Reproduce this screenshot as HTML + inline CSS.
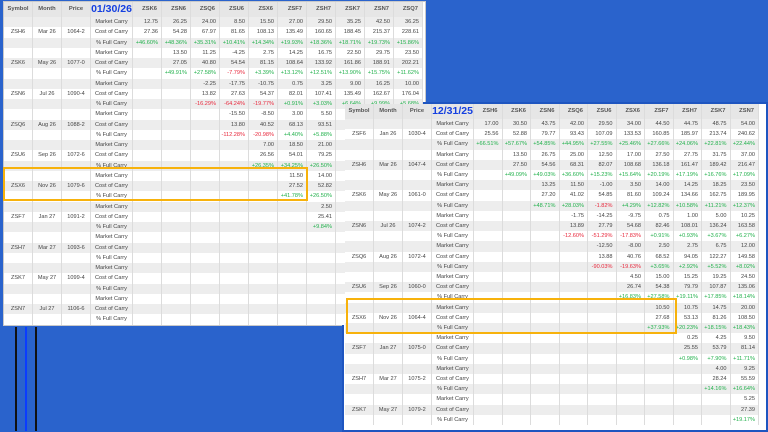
<!DOCTYPE html>
<html><head><meta charset="utf-8">
<style>
html,body{margin:0;padding:0}
body{width:768px;height:431px;background:#2a63cc;position:relative;overflow:hidden;font-family:"Liberation Sans",sans-serif}
.panel{position:absolute;background:#fff;border:1px solid #c9c9c9}
.c{position:absolute;box-sizing:border-box;font-size:5.6px;color:#444;line-height:10px;white-space:nowrap;border-right:1px solid #dcdcdc;overflow:hidden}
.h{font-weight:bold;color:#555;font-size:5.8px}
.g{color:#22b14c}.r{color:#e8283c}
.date{color:#1540e0;font-weight:bold;font-size:10.5px}
.box{position:absolute;border:2.5px solid #f7b20c;box-sizing:border-box}
.vl{position:absolute;top:327px;height:104px;width:1.5px}
</style></head><body>
<div class="panel" style="left:3px;top:1px;width:421px;height:323px"></div>
<div class="panel" style="left:342px;top:102px;width:422px;height:326px;border:2px solid #1e55c0"></div>
<div id="L"></div><div id="R"></div>
<div class="vl" style="left:15px;background:#111"></div>
<div class="vl" style="left:25px;background:#0a3cff"></div>
<div class="vl" style="left:35px;background:#111"></div>
<div class="box" style="left:3px;top:167px;width:305px;height:34px"></div>
<div class="box" style="left:346px;top:298px;width:331px;height:36px"></div>
<script>
function build(id,x0,y0,hh,rh,dw,cols,date,data){
  var el=document.getElementById(id),h='';
  var w=[29,29,29,42];for(var i=0;i<10;i++)w.push(dw);
  var xs=[x0];for(i=0;i<w.length;i++)xs.push(xs[i]+w[i]);
  var hdr=['Symbol','Month','Price',date].concat(cols);
  for(i=0;i<hdr.length;i++){
    var cls=i==3?'c date':'c h';
    h+='<div class="'+cls+'" style="left:'+xs[i]+'px;top:'+y0+'px;width:'+w[i]+'px;height:'+hh+'px;line-height:'+hh+'px;background:#e6e6e6;text-align:'+(i>3?'right;padding-right:4px':'center')+'">'+hdr[i]+'</div>';
  }
  var r=0;
  data.forEach(function(d){
    var labels=['Market Carry','Cost of Carry','% Full Carry'];
    for(var k=0;k<3;k++){
      var y=y0+hh+r*rh,bg=(r%2==0)?'#ededed':'#fff';
      var cells=[k==1?d[0]:'',k==1?d[1]:'',k==1?d[2]:'',labels[k]];
      var vals=d[4+k]||[];
      for(var j=0;j<10;j++){var v=j-d[3];cells.push(v>=0&&v<vals.length?vals[v]:'');}
      for(i=0;i<cells.length;i++){
        var t=cells[i],cl='c';
        if(k==2&&i>3&&t){cl+=t[0]=='-'?' r':' g';}
        h+='<div class="'+cl+'" style="left:'+xs[i]+'px;top:'+y+'px;width:'+w[i]+'px;height:'+(rh+0.5)+'px;line-height:'+rh+'px;background:'+bg+';text-align:'+(i>3?'right;padding-right:3px':'center')+'">'+t+'</div>';
      }
      r++;
    }
  });
  el.innerHTML=h;
}
build('L',4,2,15,10.25,29,['ZSK6','ZSN6','ZSQ6','ZSU6','ZSX6','ZSF7','ZSH7','ZSK7','ZSN7','ZSQ7'],'01/30/26',[
['ZSH6','Mar 26','1064-2',0,['12.75','26.25','24.00','8.50','15.50','27.00','29.50','35.25','42.50','36.25'],['27.36','54.28','67.97','81.65','108.13','135.49','160.65','188.45','215.37','228.61'],['+46.60%','+48.36%','+35.31%','+10.41%','+14.34%','+19.93%','+18.36%','+18.71%','+19.73%','+15.86%']],
['ZSK6','May 26','1077-0',1,['13.50','11.25','-4.25','2.75','14.25','16.75','22.50','29.75','23.50'],['27.05','40.80','54.54','81.15','108.64','133.92','161.86','188.91','202.21'],['+49.91%','+27.58%','-7.79%','+3.39%','+13.12%','+12.51%','+13.90%','+15.75%','+11.62%']],
['ZSN6','Jul 26','1090-4',2,['-2.25','-17.75','-10.75','0.75','3.25','9.00','16.25','10.00'],['13.82','27.63','54.37','82.01','107.41','135.49','162.67','176.04'],['-16.29%','-64.24%','-19.77%','+0.91%','+3.03%','+6.64%','+9.99%','+5.68%']],
['ZSQ6','Aug 26','1088-2',3,['-15.50','-8.50','3.00','5.50'],['13.80','40.52','68.13','93.51'],['-112.28%','-20.98%','+4.40%','+5.88%']],
['ZSU6','Sep 26','1072-6',4,['7.00','18.50','21.00'],['26.56','54.01','79.25'],['+26.35%','+34.25%','+26.50%']],
['ZSX6','Nov 26','1079-6',5,['11.50','14.00'],['27.52','52.82'],['+41.78%','+26.50%']],
['ZSF7','Jan 27','1091-2',6,['2.50'],['25.41'],['+9.84%']],
['ZSH7','Mar 27','1093-6',7,[],[],[]],
['ZSK7','May 27','1099-4',8,[],[],[]],
['ZSN7','Jul 27','1106-6',9,[],[],[]]
]);
build('R',345,104,15,10.2,28.5,['ZSH6','ZSK6','ZSN6','ZSQ6','ZSU6','ZSX6','ZSF7','ZSH7','ZSK7','ZSN7'],'12/31/25',[
['ZSF6','Jan 26','1030-4',0,['17.00','30.50','43.75','42.00','29.50','34.00','44.50','44.75','48.75','54.00'],['25.56','52.88','79.77','93.43','107.09','133.53','160.85','185.97','213.74','240.62'],['+66.51%','+57.67%','+54.85%','+44.95%','+27.55%','+25.46%','+27.66%','+24.06%','+22.81%','+22.44%']],
['ZSH6','Mar 26','1047-4',1,['13.50','26.75','25.00','12.50','17.00','27.50','27.75','31.75','37.00'],['27.50','54.56','68.31','82.07','108.68','136.18','161.47','189.42','216.47'],['+49.09%','+49.03%','+36.60%','+15.23%','+15.64%','+20.19%','+17.19%','+16.76%','+17.09%']],
['ZSK6','May 26','1061-0',2,['13.25','11.50','-1.00','3.50','14.00','14.25','18.25','23.50'],['27.20','41.02','54.85','81.60','109.24','134.66','162.75','189.95'],['+48.71%','+28.03%','-1.82%','+4.29%','+12.82%','+10.58%','+11.21%','+12.37%']],
['ZSN6','Jul 26','1074-2',3,['-1.75','-14.25','-9.75','0.75','1.00','5.00','10.25'],['13.89','27.79','54.68','82.46','108.01','136.24','163.58'],['-12.60%','-51.29%','-17.83%','+0.91%','+0.93%','+3.67%','+6.27%']],
['ZSQ6','Aug 26','1072-4',4,['-12.50','-8.00','2.50','2.75','6.75','12.00'],['13.88','40.76','68.52','94.05','122.27','149.58'],['-90.03%','-19.63%','+3.65%','+2.92%','+5.52%','+8.02%']],
['ZSU6','Sep 26','1060-0',5,['4.50','15.00','15.25','19.25','24.50'],['26.74','54.38','79.79','107.87','135.06'],['+16.83%','+27.58%','+19.11%','+17.85%','+18.14%']],
['ZSX6','Nov 26','1064-4',6,['10.50','10.75','14.75','20.00'],['27.68','53.13','81.26','108.50'],['+37.93%','+20.23%','+18.15%','+18.43%']],
['ZSF7','Jan 27','1075-0',7,['0.25','4.25','9.50'],['25.55','53.79','81.14'],['+0.98%','+7.90%','+11.71%']],
['ZSH7','Mar 27','1075-2',8,['4.00','9.25'],['28.24','55.59'],['+14.16%','+16.64%']],
['ZSK7','May 27','1079-2',9,['5.25'],['27.39'],['+19.17%']]
]);
</script>
</body></html>
